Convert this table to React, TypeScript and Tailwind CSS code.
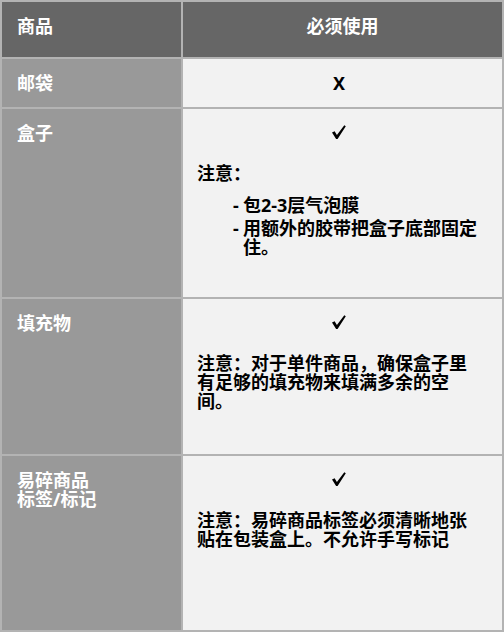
const FONT = "font-['Noto_Sans','Noto_Sans_CJK_SC',sans-serif]";

type Row = {
  label: React.ReactNode;
  height: string;
  body: React.ReactNode;
};

// calligraphic check mark, thick short stroke + thin long stroke
const Check = () => (
  <div className="flex h-[19px] justify-center pt-px">
    <svg width="14" height="14" viewBox="0 0 14 14" fill="currentColor">
      <path d="M0 7.6 L2.6 6.2 L4.9 9.9 L12.3 0.2 L13.8 1.2 L5.6 13.9 L4.1 13.9 Z" />
    </svg>
  </div>
);

const Item = ({ children }: { children: React.ReactNode }) => (
  <div className="flex">
    <span className="w-[10px] shrink-0">-</span>
    <span>{children}</span>
  </div>
);

const rows: Row[] = [
  {
    label: '邮袋',
    height: 'h-[48px]',
    body: <p className="text-center">X</p>,
  },
  {
    label: '盒子',
    height: 'h-[188px]',
    body: (
      <>
        <Check />
        <p className="mt-[21px]">注意：</p>
        <div className="mt-[13px] ml-[36px] flex flex-col gap-[4px]">
          <Item>包2-3层气泡膜</Item>
          <Item>用额外的胶带把盒子底部固定住。</Item>
        </div>
      </>
    ),
  },
  {
    label: '填充物',
    height: 'h-[155px]',
    body: (
      <>
        <Check />
        <p className="mt-[21px]">注意：对于单件商品，确保盒子里有足够的填充物来填满多余的空间。</p>
      </>
    ),
  },
  {
    label: (
      <>
        易碎商品
        <br />
        标签/标记
      </>
    ),
    height: 'h-[174px]',
    body: (
      <>
        <Check />
        <p className="mt-[21px]">注意：易碎商品标签必须清晰地张贴在包装盒上。不允许手写标记</p>
      </>
    ),
  },
];

export default function App() {
  return (
    <div className={`${FONT} w-full bg-white`}>
      <div className="grid grid-cols-[179px_1fr] gap-[2px] bg-[#b3b3b3] p-[2px] text-[18px] font-bold leading-[19px]">
        {/* Header */}
        <div className="h-[55px] bg-[#666666] pl-[15px] pt-[15px] text-white">商品</div>
        <div className="h-[55px] bg-[#666666] pt-[15px] text-center text-white">必须使用</div>

        {rows.map((row, i) => (
          <div key={i} className="contents">
            <div className={`${row.height} bg-[#999999] pl-[15px] pt-[15px] text-white`}>{row.label}</div>
            <div className={`${row.height} bg-[#f2f2f2] pl-[14px] pr-[21px] pt-[15px] text-black`}>{row.body}</div>
          </div>
        ))}
      </div>
    </div>
  );
}
